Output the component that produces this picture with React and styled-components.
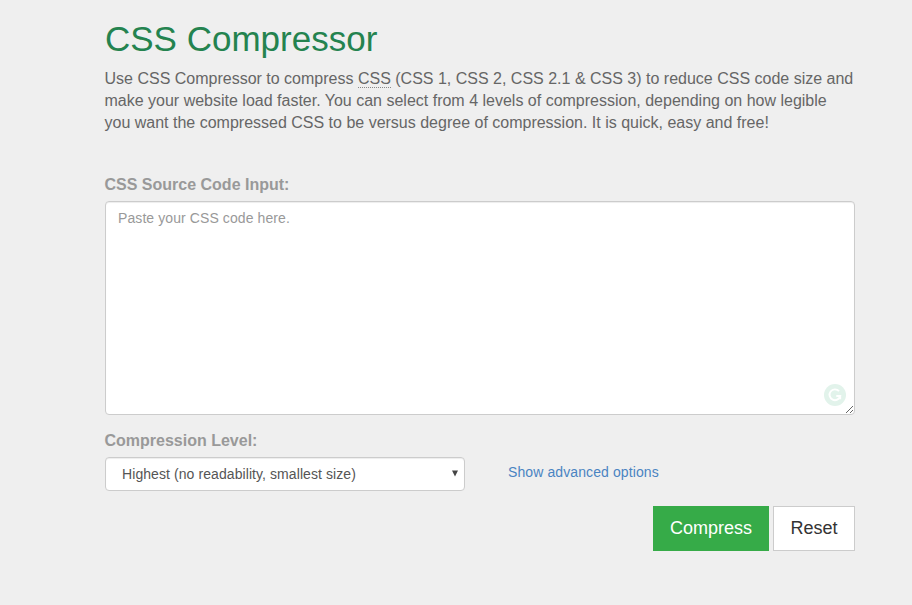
import { useState } from 'react';
import styled, { createGlobalStyle } from 'styled-components';

const GlobalStyle = createGlobalStyle`
    * {
        box-sizing: border-box;
    }
    body {
        margin: 0;
        background-color: #efefef;
        color: #666;
        font-family: "Liberation Sans", Arial, sans-serif;
        font-size: 16px;
        line-height: 22px;
    }
`

const Container = styled.main`
    width: 750px;
    margin-left: 105px;
    padding-top: 19px;
`

const Title = styled.h1`
    margin: 0;
    color: #24834f;
    font-size: 35px;
    font-weight: 400;
    line-height: 40px;
`

const Description = styled.p`
    margin: 9px 0 0 -0.5px;
    white-space: nowrap;
`

const Abbr = styled.abbr`
    display: inline-block;
    height: 20px;
    line-height: 22px;
    vertical-align: top;
    text-decoration: none;
    border-bottom: 1px dotted #888;
`

const Label = styled.label`
    display: block;
    margin-top: ${(props) => props.$top}px;
    margin-bottom: 5px;
    margin-left: -0.5px;
    color: #999;
    font-weight: 700;
    line-height: 23px;
`

const InputWrap = styled.div`
    position: relative;
    height: 214px;
`

const CodeInput = styled.textarea`
    display: block;
    width: 100%;
    height: 214px;
    padding: 6px 12px;
    border: 1px solid #ccc;
    border-radius: 4px;
    background-color: #fff;
    box-shadow: inset 0 1px 1px rgba(0, 0, 0, 0.075);
    color: #555;
    font-family: inherit;
    font-size: 14px;
    letter-spacing: 0.09px;
    line-height: 20px;
    outline: none;
    resize: vertical;
    &::placeholder {
        color: #999;
        opacity: 1;
    }
`

const Badge = styled.svg`
    position: absolute;
    right: 9px;
    bottom: 9px;
    pointer-events: none;
`

const LevelRow = styled.div`
    display: flex;
    height: 34px;
`

const SelectWrap = styled.div`
    position: relative;
    width: 360px;
    margin-right: 43px;
`

const Select = styled.select`
    display: block;
    width: 100%;
    height: 34px;
    padding: 0 16px;
    border: 1px solid #ccc;
    border-radius: 4px;
    background-color: #fff;
    box-shadow: inset 0 1px 1px rgba(0, 0, 0, 0.075);
    color: #555;
    font-family: inherit;
    font-size: 14px;
    letter-spacing: 0.08px;
    appearance: none;
`

const Arrow = styled.svg`
    position: absolute;
    top: 13px;
    right: 7px;
    pointer-events: none;
`

const AdvancedLink = styled.a`
    margin-top: 5px;
    color: #4a84c2;
    font-size: 14px;
    letter-spacing: 0.1px;
    line-height: 20px;
    text-decoration: none;
`

const Actions = styled.div`
    display: flex;
    justify-content: flex-end;
    gap: 4px;
    margin-top: 15px;
`

const Button = styled.button`
    width: ${(props) => props.$width}px;
    height: 45px;
    padding: 0 0 2px;
    border: 1px solid ${(props) => (props.$primary ? '#36ab48' : '#ccc')};
    background-color: ${(props) => (props.$primary ? '#36ab48' : '#fff')};
    color: ${(props) => (props.$primary ? '#fff' : '#333')};
    font-family: inherit;
    font-size: 18px;
    line-height: 24px;
`

export default function App()
{
    const [code, setCode] = useState('');

    return(
        <>
            <GlobalStyle />
            <Container>
                <Title>CSS Compressor</Title>
                <Description>
                    Use CSS Compressor to compress <Abbr title="Cascading Style Sheets">CSS</Abbr> (CSS 1, CSS 2, CSS 2.1 &amp; CSS 3) to reduce CSS code size and<br />
                    make your website load faster. You can select from 4 levels of compression, depending on how legible<br />
                    you want the compressed CSS to be versus degree of compression. It is quick, easy and free!
                </Description>

                <Label htmlFor="code" $top={39}>CSS Source Code Input:</Label>
                <InputWrap>
                    <CodeInput
                        id="code"
                        placeholder="Paste your CSS code here."
                        spellCheck={false}
                        value={code}
                        onChange={(e) => setCode(e.target.value)}
                    />
                    <Badge width="22" height="22" viewBox="0 0 22 22" fill="none">
                        <circle cx="11" cy="11" r="11" fill="#e2f3eb" />
                        <path d="M15 7.2A5.4 5.4 0 1 0 16.2 12H12.3M16.2 12V15.2" stroke="#fff" strokeWidth="1.9" />
                    </Badge>
                </InputWrap>

                <Label htmlFor="level" $top={14}>Compression Level:</Label>
                <LevelRow>
                    <SelectWrap>
                        <Select id="level">
                            <option>Highest (no readability, smallest size)</option>
                        </Select>
                        <Arrow width="6" height="7" viewBox="0 0 6 7">
                            <path d="M0 0.5H6L3 6.5Z" fill="#444" />
                        </Arrow>
                    </SelectWrap>
                    <AdvancedLink href="#advanced">Show advanced options</AdvancedLink>
                </LevelRow>

                <Actions>
                    <Button type="button" $primary $width={116}>Compress</Button>
                    <Button type="button" $width={82} onClick={() => setCode('')}>Reset</Button>
                </Actions>
            </Container>
        </>
    )
}
